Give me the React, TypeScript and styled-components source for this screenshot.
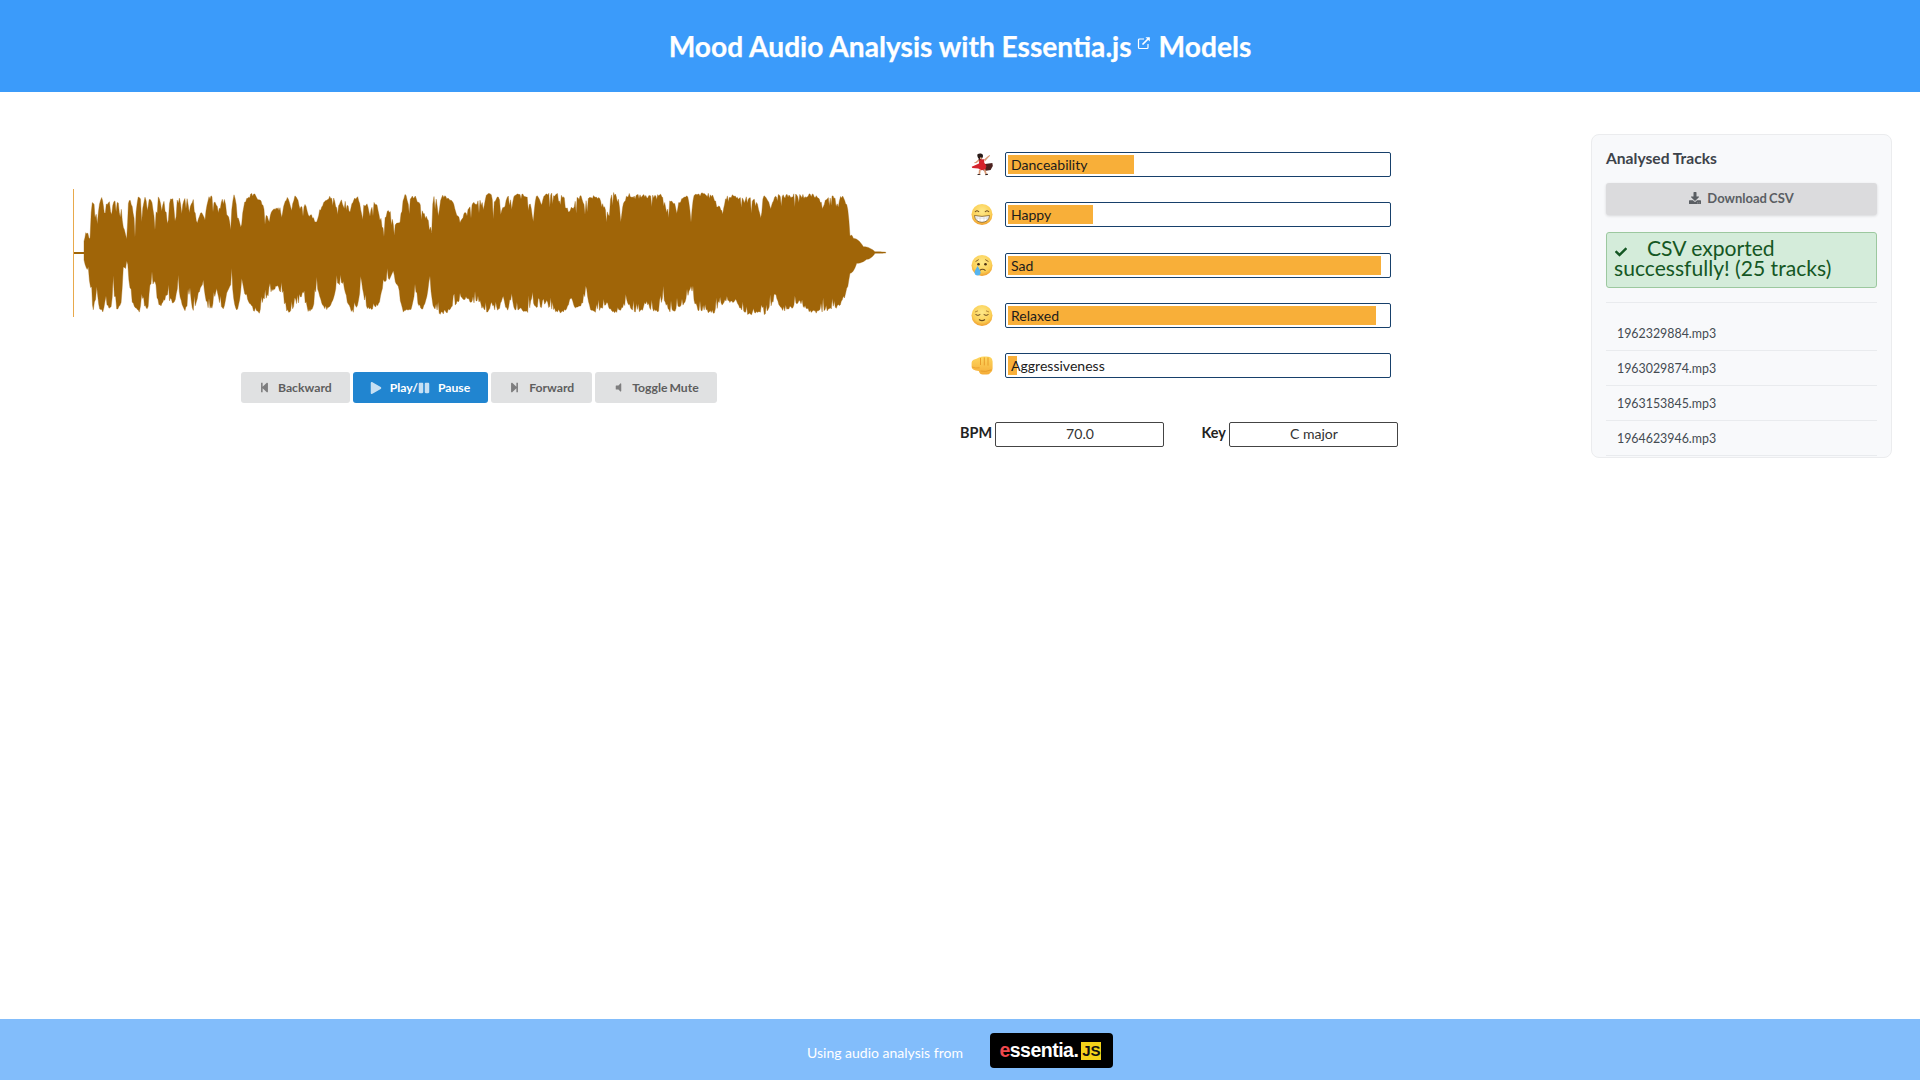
import React from 'react';
import styled, { createGlobalStyle } from 'styled-components';
import { FaCheck, FaDownload, FaPause, FaPlay, FaStepBackward, FaStepForward, FaVolumeOff } from 'react-icons/fa';

const Global = createGlobalStyle`
  html, body { margin: 0; padding: 0; background: #fff; }
  body { font-family: Lato, "Open Sans", sans-serif; color: #111; }
  * { box-sizing: border-box; }
`;

const Page = styled.div`
  width: 1920px; height: 1080px; display: flex; flex-direction: column; overflow: hidden;
`;
const Header = styled.header`
  height: 92px; flex: none; background: #3b9bfa; color: #fff; display: flex; align-items: center; justify-content: center;
  font-size: 28.15px; font-weight: 700; -webkit-text-stroke: 0.25px #fff;
`;
const LinkIcon = styled.svg`
  width: 14px; height: 14px; margin: 0 8px 7px 5px; display: block; flex: none;
`;
const Main = styled.main`
  flex: 1; display: flex; align-items: flex-start;
`;
const Left = styled.section`
  width: 960px; flex: none; padding-top: 97px; padding-left: 72px;
`;
const WaveSvg = styled.svg`
  display: block; width: 820px; height: 128px;
`;
const Controls = styled.div`
  display: flex; gap: 3px; margin: 55px 0 0 169px;
`;
const CtlButton = styled.button<{ $primary?: boolean }>`
  height: 31px; padding: 0 18px 0 ${p => (p.$primary ? 17 : 18)}px; border: 0; border-radius: 3px; display: flex; align-items: center;
  font: 700 12.2px Lato, sans-serif; word-spacing: -1px;
  background: ${p => (p.$primary ? '#2185d0' : '#e0e1e2')};
  color: ${p => (p.$primary ? '#fff' : '#5e5e5e')};
`;
const CtlIcon = styled.span<{ $gap: number; $size?: number }>`
  display: inline-flex; margin-right: ${p => p.$gap}px; font-size: ${p => p.$size ?? 11}px; opacity: .75;
`;
const Middle = styled.section`
  width: 631px; flex: none; padding-top: 60px; padding-left: 11px;
`;
const Row = styled.div`
  display: flex; align-items: center; height: 25px; margin-bottom: 25.3px;
`;
const EmojiSlot = styled.svg`
  width: 22px; height: 23px; display: block; flex: none; margin-right: 12px;
`;
const Bar = styled.div`
  width: 386px; height: 25px; border: 1px solid #17406b; border-radius: 2px; padding: 2px; background: #fff; position: relative;
`;
const Fill = styled.div`
  height: 100%; background: #f8af39;
`;
const BarLabel = styled.span`
  position: absolute; left: 5px; top: 2px; font-size: 14.05px; line-height: 19px; color: #1c1c1c;
`;
const Stats = styled.div`
  display: flex; align-items: center; margin: 44px 0 0 -11px;
`;
const StatLabel = styled.span`
  font-size: 14.4px; font-weight: 700; margin-bottom: 5px; color: #222; margin-right: 3.5px;
`;
const StatBox = styled.div<{ $gap?: number }>`
  width: 169px; height: 25px; padding-bottom: 2px; border: 1px solid #444; border-radius: 2px; display: flex; align-items: center; justify-content: center;
  font-size: 14.05px; color: #333; margin-right: ${p => p.$gap ?? 0}px;
`;
const Panel = styled.aside`
  width: 301px; margin-top: 42px; background: #f8f9fb; border: 1px solid #ebecee; border-radius: 8px; padding: 13px 14px 1px;
  overflow: hidden;
`;
const PanelTitle = styled.div`
  font-size: 15.6px; font-weight: 700; color: #3d434a; line-height: 20px; margin-bottom: 15px;
`;
const DownloadBtn = styled.button`
  width: 100%; height: 32px; padding: 0 0 2px; border: 0; border-radius: 3px; background: #dbdbdd; color: #5a5e63; display: flex; align-items: center; justify-content: center;
  font: 700 13px Lato, sans-serif; word-spacing: -1px; box-shadow: 0 1px 3px rgba(0,0,0,.14); gap: 6px;
`;
const Alert = styled.div`
  margin-top: 17px; height: 56px; background: #d4ecda; border: 1px solid #9cc89f; border-radius: 3px; padding: 5px 7px; color: #155724;
  font-size: 21.1px; line-height: 20px;
`;
const AlertIcon = styled.span`
  display: inline-flex; font-size: 12px; margin: 0 20px 0 1px; vertical-align: -2px;
`;
const Divider = styled.div`
  height: 1px; background: #e9ebee; margin-top: 14px; margin-bottom: 13px;
`;
const Track = styled.div`
  height: 35px; padding-left: 11px; display: flex; align-items: center; font-size: 12.4px; color: #444b52; border-bottom: 1px solid #e9ebee;
`;
const Footer = styled.footer`
  height: 61px; flex: none; background: #82bdfb; display: flex; align-items: center; padding: 6px 0 0 807px; color: #fff; font-size: 14px;
`;
const Logo = styled.div`
  width: 123px; height: 35px; margin-left: 27px; margin-top: -4px; padding-right: 2px; background: #000; border-radius: 4px; display: flex; align-items: center; justify-content: center;
  font: 700 19.5px "Liberation Sans", sans-serif; letter-spacing: -0.5px; color: #fff;
`;
const LogoE = styled.span`color: #f0484e;`;
const LogoJs = styled.span`
  width: 20px; height: 18px; margin-left: 3px; display: inline-flex; align-items: center; justify-content: center;
  background: #f3d21a; color: #111; font-size: 15px; letter-spacing: 0;
`;

const z1Top: number[][] = [[72,210],[80,185],[90,205],[97,95],[105,110],[112,160],[125,75],[133,125],[145,90],[155,125],[165,85],[178,100],[190,170],[200,205],[208,85],[225,165],[238,72],[245,130],[255,80],[262,120],[270,78],[285,170],[295,80],[305,120],[312,92],[322,145],[335,78],[345,145],[355,78],[365,120],[378,78],[388,120],[400,85],[412,150],[425,125],[435,140],[450,75],[462,95],[475,120],[490,80],[500,130],[512,170],[522,72],[532,135],[542,165],[560,85],[578,68],[600,90],[615,125],[628,150],[640,115],[660,110],[665,140],[682,80],[695,115],[708,75],[720,110],[735,100],[745,130],[770,155],[785,110],[800,80],[815,75],[830,110],[850,85],[870,125],[890,75],[905,130],[918,95],[930,130],[945,95],[960,140],[972,165],[985,115],[1000,160],[1020,150],[1035,70],[1045,100],[1060,75],[1075,90],[1090,130],[1105,150],[1115,180],[1122,72],[1135,130],[1145,75],[1170,85],[1190,130],[1200,150]];
const z1Bot: number[][] = [[72,270],[85,300],[95,360],[100,425],[110,360],[125,430],[135,400],[150,420],[160,340],[170,420],[180,410],[190,300],[200,290],[210,360],[220,410],[238,430],[245,380],[262,420],[270,350],[285,340],[300,410],[320,380],[340,400],[355,350],[375,425],[390,360],[400,425],[415,370],[430,340],[450,420],[470,360],[490,425],[500,370],[515,340],[530,425],[545,330],[560,380],[595,435],[610,390],[630,370],[650,350],[670,370],[680,430],[695,420],[730,370],[750,430],[770,350],[800,420],[830,350],[850,340],[880,430],[905,340],[925,420],[950,410],[970,340],[985,330],[1000,310],[1015,350],[1033,430],[1050,430],[1065,360],[1085,420],[1110,320],[1122,420],[1150,435],[1180,410],[1200,390]];
const z2Top: number[][] = [[0,90],[10,100],[28,62],[40,105],[55,75],[62,130],[75,105],[85,72],[95,110],[105,72],[135,70],[145,90],[160,150],[172,72],[185,100],[195,72],[215,68],[250,75],[265,120],[280,110],[300,72],[315,110],[325,75],[350,75],[365,100],[385,135],[398,65],[412,80],[422,145],[442,70],[480,72],[500,75],[545,72],[560,120],[575,85],[590,120],[605,85],[620,75],[633,150],[645,72],[685,65],[710,100],[728,130],[745,72],[790,80],[820,85],[842,135],[852,68],[872,115],[895,70],[930,75],[950,70],[975,75],[1000,70],[1030,105],[1045,75],[1065,75],[1075,110],[1085,75],[1100,100],[1110,190],[1120,205],[1150,230],[1185,245],[1220,247]];
const z2Bot: number[][] = [[0,400],[20,430],[35,400],[50,425],[70,380],[80,425],[95,375],[105,420],[125,425],[140,430],[155,385],[175,420],[200,400],[215,425],[250,430],[275,385],[290,420],[320,375],[340,430],[380,405],[410,430],[440,395],[475,430],[500,400],[530,430],[550,380],[570,430],[600,415],[633,355],[660,425],[700,430],[735,400],[770,395],[800,435],[850,435],[888,375],[905,425],[960,400],[1000,430],[1020,430],[1060,420],[1090,390],[1100,360],[1110,310],[1130,280],[1160,268],[1185,250],[1220,249]];

// Wave coordinates are local to the svg, whose origin is (72, 189) on the page; its centre line is y = 64.
const toLocal = (pts: number[][], ox: number) => pts.map(([x, y]) => [ox + x / 3 - 72, 170 + y / 3 - 189]);
const wavePoints = (a: number[][], b: number[][], startSeed: number) => {
  const src = [...toLocal(a, 60), ...toLocal(b, 480)];
  const out: string[] = [];
  let seed = startSeed;
  const rand = () => {
    seed = (seed * 1103515245 + 12345) & 0x7fffffff;
    return (seed >> 8) / 8388607;
  };
  for (let i = 0; i < src.length - 1; i++) {
    const [x0, y0] = src[i];
    const [x1, y1] = src[i + 1];
    const steps = Math.max(1, Math.round(x1 - x0));
    const a0 = Math.abs(y0 - 64);
    const a1 = Math.abs(y1 - 64);
    for (let s = 0; s < steps; s++) {
      const t = s / steps;
      // keep the envelope near its peaks, so that the dips stay narrow
      const k = a0 > a1 ? t * t : 1 - (1 - t) * (1 - t);
      const y = y0 + (y1 - y0) * k;
      const big = a0 > 12 && a1 > 12;
      const inward = Math.sign(64 - y);
      const jitter = big ? rand() * 4 * inward : 0;
      const spike = big && rand() > 0.85 ? (3 + rand() * 9) * inward : 0;
      out.push(`${(x0 + (x1 - x0) * t).toFixed(1)},${(y + jitter + spike).toFixed(1)}`);
    }
  }
  return out;
};
const wavePoly = [...wavePoints(z1Top, z2Top, 1717), ...wavePoints(z1Bot, z2Bot, 4343).reverse()].join(' ');

const Waveform = () => (
  <WaveSvg viewBox="0 0 820 128">
    <polygon points={wavePoly} fill="#a06508" stroke="#a06508" strokeOpacity=".35" strokeWidth="1" strokeLinejoin="round" />
    <rect x="1" y="63" width="12" height="2" fill="#a06508" />
    <rect x="1" y="0" width="1" height="128" fill="#e8a94c" />
  </WaveSvg>
);

const ExternalLink = () => (
  <LinkIcon viewBox="0 0 14 14" fill="none" stroke="#fff">
    <path d="M7 3H2.5a1 1 0 0 0-1 1v7.5a1 1 0 0 0 1 1H10a1 1 0 0 0 1-1V8" strokeWidth="1.2" />
    <path d="M5.5 8.5L12 2" strokeWidth="1.7" />
    <path d="M8.5 1.2h4.3v4.3z" fill="#fff" stroke="none" />
  </LinkIcon>
);

const Face = () => (
  <>
    <defs>
      <radialGradient id="fg" cx="50%" cy="35%" r="65%">
        <stop offset="0%" stopColor="#fee98a" />
        <stop offset="70%" stopColor="#fbcf55" />
        <stop offset="100%" stopColor="#ef9c2c" />
      </radialGradient>
      <linearGradient id="fistg" x1="0" y1="0" x2="0" y2="1">
        <stop offset="0%" stopColor="#fed75f" />
        <stop offset="100%" stopColor="#f5ad38" />
      </linearGradient>
    </defs>
    <circle cx="11" cy="11.5" r="10.5" fill="url(#fg)" />
  </>
);
const Dancer = () => (
  <EmojiSlot viewBox="0 0 22 23">
    <path d="M13 6.5l3.5-3 2-1.5.6.8-2 2-3 3.5z" fill="#d99a76" />
    <path d="M8.5 5.5L4.5 9l-1.2.3.2.9 2-.3 3.5-2.4z" fill="#d99a76" />
    <path d="M6.5 1.2C8 .2 10.6.2 11.6 1.6c.8 1.2.4 3-.6 3.8-.4 1.2-.8 2-2 2.6-1 .1-1.6-.8-1.2-2.2C7 5 5.8 2.6 6.5 1.2z" fill="#2a1b18" />
    <path d="M9 4.2l2 .5-.5 1.8-1.5-.5z" fill="#e2a882" />
    <path d="M8.3 6.6l4.8-.3.3 5-5.6.4z" fill="#d5232c" />
    <path d="M14 11l7.4-1 .4 3-2.2 4-6 1-3-1.6z" fill="#4c2320" />
    <path d="M7.4 10.8l6.4-.5 1.6 2.7-1 3.5-4 .8-3.2-1.8-5.9-.6-.6-1.2z" fill="#d5232c" />
    <path d="M8 16.5l1.8.6-.7 4.4h-1.6zM12.5 16.5l1.8-.2 1.6 4.8-1.6.6z" fill="#d99a76" />
    <path d="M6.8 21l2.6.2v.9H6.4zM14.2 21.2l2.6-.4.3.9-2.6.6z" fill="#2a1b18" />
  </EmojiSlot>
);
const Happy = () => (
  <EmojiSlot viewBox="0 0 22 23">
    <Face />
    <path d="M4 9q2-2.6 4 0M14 9q2-2.6 4 0" fill="none" stroke="#6b4a1e" strokeWidth="1.1" />
    <path d="M3.5 12.5q7.5 1.8 15 0q-.6 6.5-7.5 6.8q-6.9-.3-7.5-6.8z" fill="#fff" stroke="#6b4a1e" strokeWidth=".7" />
    <path d="M3.8 15.1h14.4M6 13.1v5M9 13.5v5.6M13 13.5v5.6M16 13.1v5" stroke="#bbb" strokeWidth=".4" />
  </EmojiSlot>
);
const Sad = () => (
  <EmojiSlot viewBox="0 0 22 23">
    <Face />
    <path d="M4.5 7.6l3.2-2M17.5 7.6l-3.2-2" stroke="#7a5522" strokeWidth=".9" fill="none" />
    <circle cx="7.5" cy="10.2" r="1.3" fill="#4c3213" />
    <circle cx="14.5" cy="10.2" r="1.3" fill="#4c3213" />
    <path d="M8.5 16.6q3-2.6 6 0" fill="none" stroke="#6b4a1e" strokeWidth="1.1" />
    <path d="M6.6 12c-1.6 3-3 4.9-3 6.6a3 3 0 0 0 6 0c0-1.7-1.4-3.6-3-6.6z" fill="#55b4ef" />
  </EmojiSlot>
);
const Relaxed = () => (
  <EmojiSlot viewBox="0 0 22 23">
    <Face />
    <path d="M4 8l3-1.2M18 8l-3-1.2" stroke="#9a6c28" strokeWidth=".7" fill="none" />
    <path d="M4.5 10.5q2.4 1.8 4.8 0M12.7 10.5q2.4 1.8 4.8 0" fill="none" stroke="#6b4a1e" strokeWidth="1" />
    <path d="M8 15.5q3 2.2 6 0" fill="none" stroke="#6b4a1e" strokeWidth="1.1" />
  </EmojiSlot>
);
const Fist = () => (
  <EmojiSlot viewBox="0 0 22 23">
    <path d="M8 3.5q3-1.4 6-1q3-.4 5 .6q2.6 1.2 2.6 4.4v7q0 3.4-2.4 4.4q-1 1.6-3.4 1.6h-4q-3 0-4-3.5q-3.4-.4-5.6-1.6q-1.6-.8-1.6-2.6v-4q0-2 2-3q3-1 5.4-2.3z" fill="url(#fistg)" />
    <path d="M9.5 4v7M13.3 3.4v8M17 3.4v8.2" stroke="#e89c2a" strokeWidth="1" />
    <path d="M1 13q3.6 1.6 7.6.8" stroke="#e89c2a" strokeWidth=".8" fill="none" />
    <path d="M9.5 17q5 1.4 11-1.2" stroke="#e89c2a" strokeWidth="1" fill="none" />
  </EmojiSlot>
);

const moods = [
  { name: 'Danceability', value: 33.1, Icon: Dancer },
  { name: 'Happy', value: 22.4, Icon: Happy },
  { name: 'Sad', value: 98.2, Icon: Sad },
  { name: 'Relaxed', value: 96.8, Icon: Relaxed },
  { name: 'Aggressiveness', value: 2.4, Icon: Fist },
];
const tracks = ['1962329884.mp3', '1963029874.mp3', '1963153845.mp3', '1964623946.mp3'];

export default function App() {
  return (
    <Page>
      <Global />
      <Header>
        Mood Audio Analysis with Essentia.js
        <ExternalLink />
        Models
      </Header>
      <Main>
        <Left>
          <Waveform />
          <Controls>
            <CtlButton><CtlIcon $gap={8}><FaStepBackward /></CtlIcon>Backward</CtlButton>
            <CtlButton $primary><CtlIcon $gap={8} $size={12}><FaPlay /></CtlIcon>Play/<CtlIcon $gap={8} $size={12}><FaPause /></CtlIcon>Pause</CtlButton>
            <CtlButton><CtlIcon $gap={9}><FaStepForward /></CtlIcon>Forward</CtlButton>
            <CtlButton><CtlIcon $gap={8}><FaVolumeOff /></CtlIcon>Toggle Mute</CtlButton>
          </Controls>
        </Left>
        <Middle>
          {moods.map(({ name, value, Icon }) => (
            <Row key={name}>
              <Icon />
              <Bar>
                <Fill style={{ width: `${value}%` }} />
                <BarLabel>{name}</BarLabel>
              </Bar>
            </Row>
          ))}
          <Stats>
            <StatLabel>BPM</StatLabel>
            <StatBox $gap={37}>70.0</StatBox>
            <StatLabel>Key</StatLabel>
            <StatBox>C major</StatBox>
          </Stats>
        </Middle>
        <Panel>
          <PanelTitle>Analysed Tracks</PanelTitle>
          <DownloadBtn><FaDownload size={12} />Download CSV</DownloadBtn>
          <Alert><AlertIcon><FaCheck /></AlertIcon>CSV exported successfully! (25 tracks)</Alert>
          <Divider />
          {tracks.map(t => <Track key={t}>{t}</Track>)}
        </Panel>
      </Main>
      <Footer>
        Using audio analysis from
        <Logo><LogoE>e</LogoE>ssentia.<LogoJs>JS</LogoJs></Logo>
      </Footer>
    </Page>
  );
}
